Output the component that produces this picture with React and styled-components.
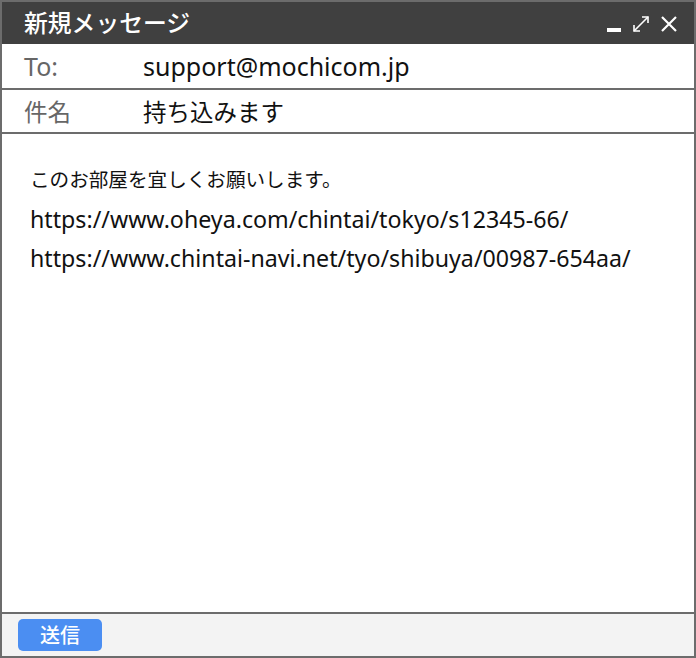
import React from "react";
import styled, { createGlobalStyle } from "styled-components";

const GlobalStyle = createGlobalStyle`
  html, body {
    margin: 0;
    padding: 0;
    background: #ffffff;
  }
  body {
    font-family: "Noto Sans", "Noto Sans CJK JP", sans-serif;
  }
`;

const Window = styled.div`
  display: flex;
  flex-direction: column;
  width: 696px;
  height: 658px;
  box-sizing: border-box;
  border: 2px solid #6c6c6c;
  background: #ffffff;
`;

const TitleBar = styled.div`
  display: flex;
  align-items: center;
  justify-content: space-between;
  height: 42px;
  padding: 0 16px 0 22px;
  background: #404040;
  color: #ffffff;
`;

const Title = styled.div`
  font-size: 23.8px;
  font-weight: 500;
  line-height: 42px;
`;

const Controls = styled.div`
  display: flex;
  align-items: center;
  gap: 10px;
  padding-top: 2px;
`;

const Field = styled.div`
  display: flex;
  align-items: center;
  height: ${(p) => p.h}px;
  border-bottom: 2px solid #6c6c6c;
  font-size: ${(p) => p.size}px;
`;

const Label = styled.div`
  width: 119px;
  padding-left: 22px;
  color: #666666;
`;

const Value = styled.div`
  color: #111111;
`;

const Body = styled.div`
  flex: 1;
  padding: 26px 28px;
  line-height: 39.5px;
  color: #111111;
`;

const Line = styled.div`
  font-size: ${(p) => p.size}px;
`;

const Footer = styled.div`
  display: flex;
  align-items: center;
  height: 42px;
  padding: 0 16px;
  border-top: 2px solid #6c6c6c;
  background: #f3f3f3;
`;

const SendButton = styled.button`
  width: 84px;
  height: 32px;
  border: none;
  border-radius: 5px;
  background: #4b8ef2;
  color: #ffffff;
  font-family: "Noto Sans CJK JP", sans-serif;
  font-size: 20px;
  font-weight: 500;
  line-height: 32px;
  padding: 0;
`;

const Minimize = () => (
  <svg width="16" height="20" viewBox="0 0 16 20">
    <rect x="1" y="14" width="14" height="4" fill="#ffffff" />
  </svg>
);

const Expand = () => (
  <svg width="18" height="18" viewBox="0 0 18 18" fill="none" stroke="#ffffff" strokeWidth="1.6">
    <path d="M2 16 L16 2" />
    <path d="M10 2 H16 V8" />
    <path d="M2 10 V16 H8" />
  </svg>
);

const Close = () => (
  <svg width="18" height="18" viewBox="0 0 18 18" fill="none" stroke="#ffffff" strokeWidth="2.2">
    <path d="M2 2 L16 16 M16 2 L2 16" />
  </svg>
);

export default function App() {
  return (
    <>
      <GlobalStyle />
      <Window>
        <TitleBar>
          <Title>新規メッセージ</Title>
          <Controls>
            <Minimize />
            <Expand />
            <Close />
          </Controls>
        </TitleBar>
        <Field h={44} size={25}>
          <Label>To:</Label>
          <Value>support@mochicom.jp</Value>
        </Field>
        <Field h={42} size={23.5}>
          <Label>件名</Label>
          <Value>持ち込みます</Value>
        </Field>
        <Body>
          <Line size={19.6}>このお部屋を宜しくお願いします。</Line>
          <Line size={23.2}>https://www.oheya.com/chintai/tokyo/s12345-66/</Line>
          <Line size={23.2}>https://www.chintai-navi.net/tyo/shibuya/00987-654aa/</Line>
        </Body>
        <Footer>
          <SendButton>送信</SendButton>
        </Footer>
      </Window>
    </>
  );
}
